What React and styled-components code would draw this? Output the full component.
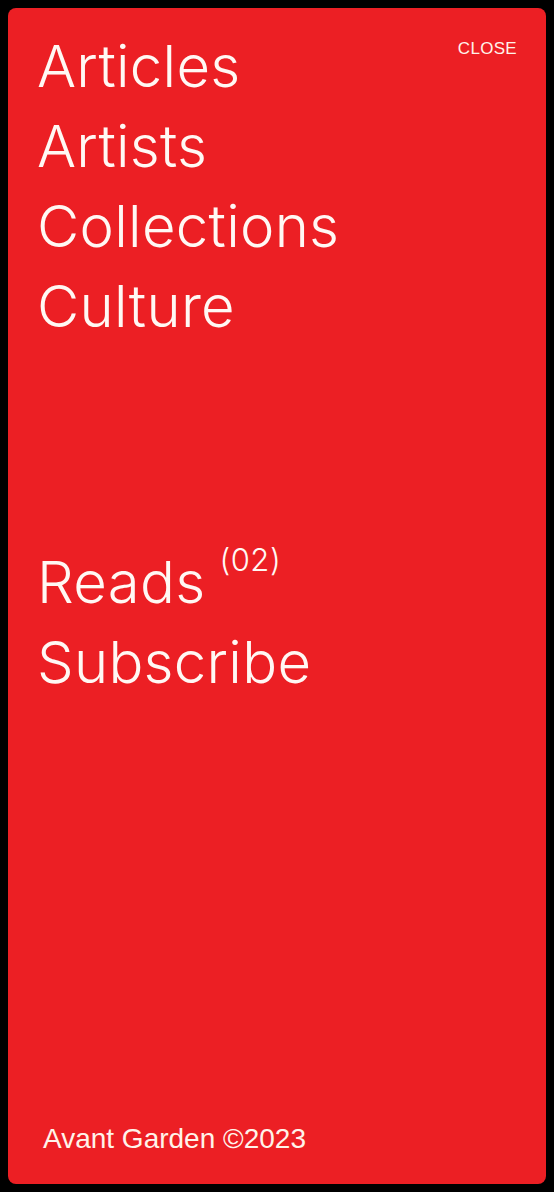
import React from 'react';
import styled, { createGlobalStyle } from 'styled-components';

const GlobalStyle = createGlobalStyle`
    html, body {
        margin: 0;
        padding: 0;
        background: #000;
        height: 100%;
    }
    #root {
        height: 100%;
    }
`

const primaryLinks = ['Articles', 'Artists', 'Collections', 'Culture'];

function App() {
    return <Page>
        <GlobalStyle />
        <Panel>
            <Top>
                <NavList>
                    {primaryLinks.map(label => (
                        <NavItem key={label}>{label}</NavItem>
                    ))}
                </NavList>
                <CloseButton>CLOSE</CloseButton>
            </Top>
            <NavList spaced>
                <NavItem>Reads<Count>(02)</Count></NavItem>
                <NavItem>Subscribe</NavItem>
            </NavList>
            <Footer>Avant Garden ©2023</Footer>
        </Panel>
    </Page>;
}

export default App;

const Page = styled.div`
    box-sizing: border-box;
    height: 100%;
    padding: 8px;
    background: #000;
`

const Panel = styled.div`
    box-sizing: border-box;
    height: 100%;
    display: flex;
    flex-direction: column;
    background-color: #ec1f24;
    border-radius: 8px;
    padding: 18px 29px 30px 29px;
    color: #fff8f4;
`

const Top = styled.div`
    display: flex;
    justify-content: space-between;
    align-items: flex-start;
`

const NavList = styled.ul`
    list-style: none;
    margin: ${props => props.spaced ? '196px 0 0 0' : '0'};
    padding: 0;
`

const NavItem = styled.li`
    font-family: 'Inter', 'Liberation Sans', sans-serif;
    font-weight: 300;
    font-size: 58px;
    line-height: 80px;
    letter-spacing: 0.3px;
    white-space: nowrap;
`

const Count = styled.sup`
    font-size: 31px;
    letter-spacing: 0.5px;
    margin-left: 14px;
    vertical-align: 32px;
    line-height: 0;
`

const CloseButton = styled.button`
    background: none;
    border: none;
    padding: 0;
    margin-top: 13px;
    color: #fff3ea;
    font-family: 'Liberation Sans', Arial, sans-serif;
    font-size: 17px;
    letter-spacing: 0.3px;
    cursor: pointer;
`

const Footer = styled.div`
    margin-top: auto;
    padding-left: 6px;
    font-family: 'Liberation Sans', Arial, sans-serif;
    font-size: 28px;
    color: #fff3ea;
    line-height: 30px;
`
